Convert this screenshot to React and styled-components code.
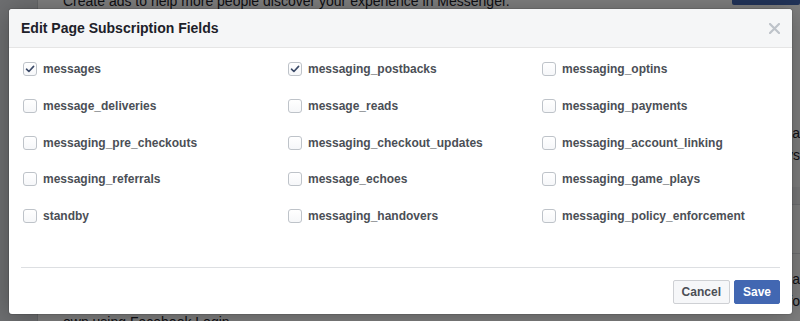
import React from 'react';
import styled, { createGlobalStyle } from 'styled-components';

const GlobalStyle = createGlobalStyle`
  html, body {
    margin: 0;
    padding: 0;
    width: 800px;
    height: 321px;
    overflow: hidden;
    font-family: "Liberation Sans", Arial, Helvetica, sans-serif;
  }
`;

const fields = [
  ['messages', true],
  ['messaging_postbacks', true],
  ['messaging_optins', false],
  ['message_deliveries', false],
  ['message_reads', false],
  ['messaging_payments', false],
  ['messaging_pre_checkouts', false],
  ['messaging_checkout_updates', false],
  ['messaging_account_linking', false],
  ['messaging_referrals', false],
  ['message_echoes', false],
  ['messaging_game_plays', false],
  ['standby', false],
  ['messaging_handovers', false],
  ['messaging_policy_enforcement', false],
];

/* page behind the dialog */
const Page = styled.div`
  position: relative;
  display: flex;
  width: 800px;
  height: 321px;
  background: #fff;
  overflow: hidden;
`;

const Sidebar = styled.div`
  width: 37px;
  flex: none;
  background: #dcdee3;
  border-right: 1px solid #c9ccd1;
`;

const Main = styled.div`
  flex: 1;
  display: flex;
  flex-direction: column;
  background: #fff;
`;

const TopRow = styled.div`
  display: flex;
  justify-content: space-between;
  align-items: flex-start;
  padding-left: 25px;
  margin-top: -8px;
`;

const PageText = styled.div`
  font-size: 14px;
  line-height: 18px;
  color: #1d2129;
  white-space: nowrap;
`;

const PageButton = styled.div`
  width: 68px;
  height: 13px;
  background: #4267b2;
  border-radius: 2px;
`;

const Section = styled.div`
  display: flex;
  flex-direction: column;
  align-items: flex-end;
  height: ${p => p.$h}px;
  background: ${p => (p.$band ? '#f2f3f5' : '#fff')};
  border-bottom: ${p => (p.$line ? '1px solid #dddfe2' : 'none')};
  padding-top: ${p => p.$pt || 0}px;
  box-sizing: border-box;
`;

const SideText = styled.div`
  font-size: 14px;
  line-height: 22px;
  color: #1d2129;
  white-space: nowrap;
  padding-right: ${p => p.$pr || 0}px;
`;

const BottomText = styled(PageText)`
  padding-left: 25px;
  margin-top: auto;
  margin-bottom: -10px;
`;

/* dialog */
const Overlay = styled.div`
  position: absolute;
  inset: 0;
  background: rgba(0, 0, 0, 0.5);
  padding: 9px 0 0 9px;
  box-sizing: border-box;
`;

const Dialog = styled.div`
  width: 783px;
  height: 305px;
  background: #fff;
  border-radius: 3px;
  box-shadow: 0 2px 26px rgba(0, 0, 0, 0.3), 0 0 0 1px rgba(0, 0, 0, 0.1);
  display: flex;
  flex-direction: column;
  overflow: hidden;
`;

const Header = styled.div`
  display: flex;
  align-items: center;
  justify-content: space-between;
  height: 38px;
  padding: 0 12px;
  background: #f5f6f7;
  border-bottom: 1px solid #e5e5e5;
  border-radius: 3px 3px 0 0;
`;

const Title = styled.h3`
  margin: 0;
  font-size: 14px;
  font-weight: bold;
  color: #1d2129;
  line-height: 19px;
  padding-top: 1px;
`;

const Close = styled.button`
  border: 0;
  background: none;
  padding: 0;
  width: 12px;
  height: 12px;
  display: flex;
  align-items: center;
  justify-content: center;
  margin-right: 0;
  cursor: pointer;
`;

const Body = styled.div`
  flex: 1;
  padding: 11px 12px 0 14px;
`;

const Grid = styled.div`
  display: grid;
  grid-template-columns: 265px 254px 1fr;
  grid-auto-rows: 20px;
  row-gap: 16.75px;
`;

const Field = styled.label`
  display: flex;
  align-items: center;
  gap: 6px;
  font-size: 12px;
  font-weight: bold;
  color: #4b4f56;
  cursor: pointer;
`;

const Box = styled.span`
  width: 12px;
  height: 12px;
  flex: none;
  border: 1px solid #bec3c9;
  border-radius: 3px;
  background: linear-gradient(#fff, #f6f7f9);
  display: flex;
  align-items: center;
  justify-content: center;
`;

const Footer = styled.div`
  margin: 0 12px;
  border-top: 1px solid #dddfe2;
  padding: 12px 0 10px;
  display: flex;
  justify-content: flex-end;
  gap: 4px;
`;

const Button = styled.button`
  height: 24px;
  padding: 0 8px;
  border-radius: 2px;
  font-family: inherit;
  font-size: 12px;
  font-weight: bold;
  line-height: 22px;
  border: 1px solid ${p => (p.$primary ? '#4267b2' : '#ced0d4')};
  background: ${p => (p.$primary ? '#4267b2' : '#f6f7f9')};
  color: ${p => (p.$primary ? '#fff' : '#4b4f56')};
  cursor: pointer;
`;

const Check = () => (
  <svg width="10" height="10" viewBox="0 0 10 10">
    <path d="M1.5 5.2 L3.9 7.5 L8.6 2.4" fill="none" stroke="#3b4a68" strokeWidth="1.6" strokeLinecap="round" strokeLinejoin="round" />
  </svg>
);

const CloseIcon = () => (
  <svg width="11" height="11" viewBox="0 0 11 11">
    <path d="M1 1 L10 10 M10 1 L1 10" stroke="#bec3c9" strokeWidth="2.2" strokeLinecap="round" />
  </svg>
);

export default function App() {
  return (
    <>
      <GlobalStyle />
      <Page>
        <Sidebar />
        <Main>
          <TopRow>
            <PageText>Create ads to help more people discover your experience in Messenger.</PageText>
            <PageButton />
          </TopRow>
          <Section $h={178} $pt={112}>
            <SideText $pr={0}>a</SideText>
            <SideText $pr={0}>ys</SideText>
          </Section>
          <Section $h={18} $band $line />
          <Section $h={50} $line />
          <Section $h={60} $pt={14}>
            <SideText $pr={0}>a</SideText>
            <SideText $pr={0}>fo</SideText>
          </Section>
          <BottomText>own using Facebook Login.</BottomText>
        </Main>
        <Overlay>
          <Dialog>
            <Header>
              <Title>Edit Page Subscription Fields</Title>
              <Close aria-label="Close"><CloseIcon /></Close>
            </Header>
            <Body>
              <Grid>
                {fields.map(([name, checked]) => (
                  <Field key={name}>
                    <Box>{checked && <Check />}</Box>
                    {name}
                  </Field>
                ))}
              </Grid>
            </Body>
            <Footer>
              <Button>Cancel</Button>
              <Button $primary>Save</Button>
            </Footer>
          </Dialog>
        </Overlay>
      </Page>
    </>
  );
}
